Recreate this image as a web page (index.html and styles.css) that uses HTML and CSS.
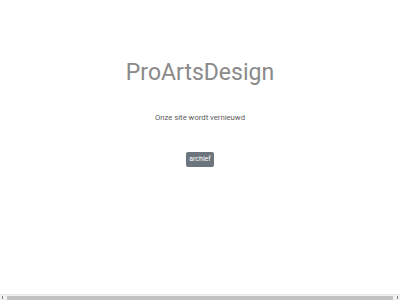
FILE: index.html
```html
<!DOCTYPE html>
<html lang="nl">
<head>
  <meta charset="UTF-8">
  <title>ProArtsDesign</title>
  <link rel="stylesheet" href="styles.css">
</head>
<body>

  <div class="page">
    <h1 class="logo">ProArtsDesign</h1>
    <p class="notice">Onze site wordt vernieuwd</p>
    <a class="archive-button" href="#">archief</a>
  </div>

  <div class="scrollbar">
    <span class="scroll-arrow"></span>
    <span class="scroll-thumb"></span>
    <span class="scroll-arrow"></span>
  </div>

</body>
</html>
```

FILE: styles.css
```css
* { margin: 0; padding: 0; box-sizing: border-box; }
html, body { height: 100%; overflow: hidden; }
body {
  font-family: Roboto, "Liberation Sans", sans-serif;
  background: #fff;
  color: #555;
  display: flex;
  flex-direction: column;
}
.page {
  flex: 1;
  display: flex;
  flex-direction: column;
  align-items: center;
  padding-top: 57px;
}
.logo {
  font-size: 23px;
  font-weight: 400;
  color: #8a8a8a;
  line-height: 32px;
}
.notice {
  font-size: 7.7px;
  line-height: 10px;
  margin-top: 24px;
  color: #5a5a5a;
}
.archive-button {
  margin-top: 29px;
  display: inline-block;
  padding: 3px 3.5px;
  font-size: 7px;
  line-height: 9px;
  color: #fff;
  background: #6c757d;
  border-radius: 2px;
  text-decoration: none;
}

/* horizontal scrollbar of the captured window */
.scrollbar {
  height: 6px;
  background: #f1f1f1;
  border-top: 1px solid #e8e8e8;
  display: flex;
  align-items: center;
  padding: 0 2px;
  gap: 2px;
}
.scroll-arrow {
  width: 1px;
  height: 3px;
  background: #7a7a7a;
}
.scroll-thumb {
  flex: 1;
  height: 4px;
  margin: 0 2px;
  background: #c1c1c1;
}
```
